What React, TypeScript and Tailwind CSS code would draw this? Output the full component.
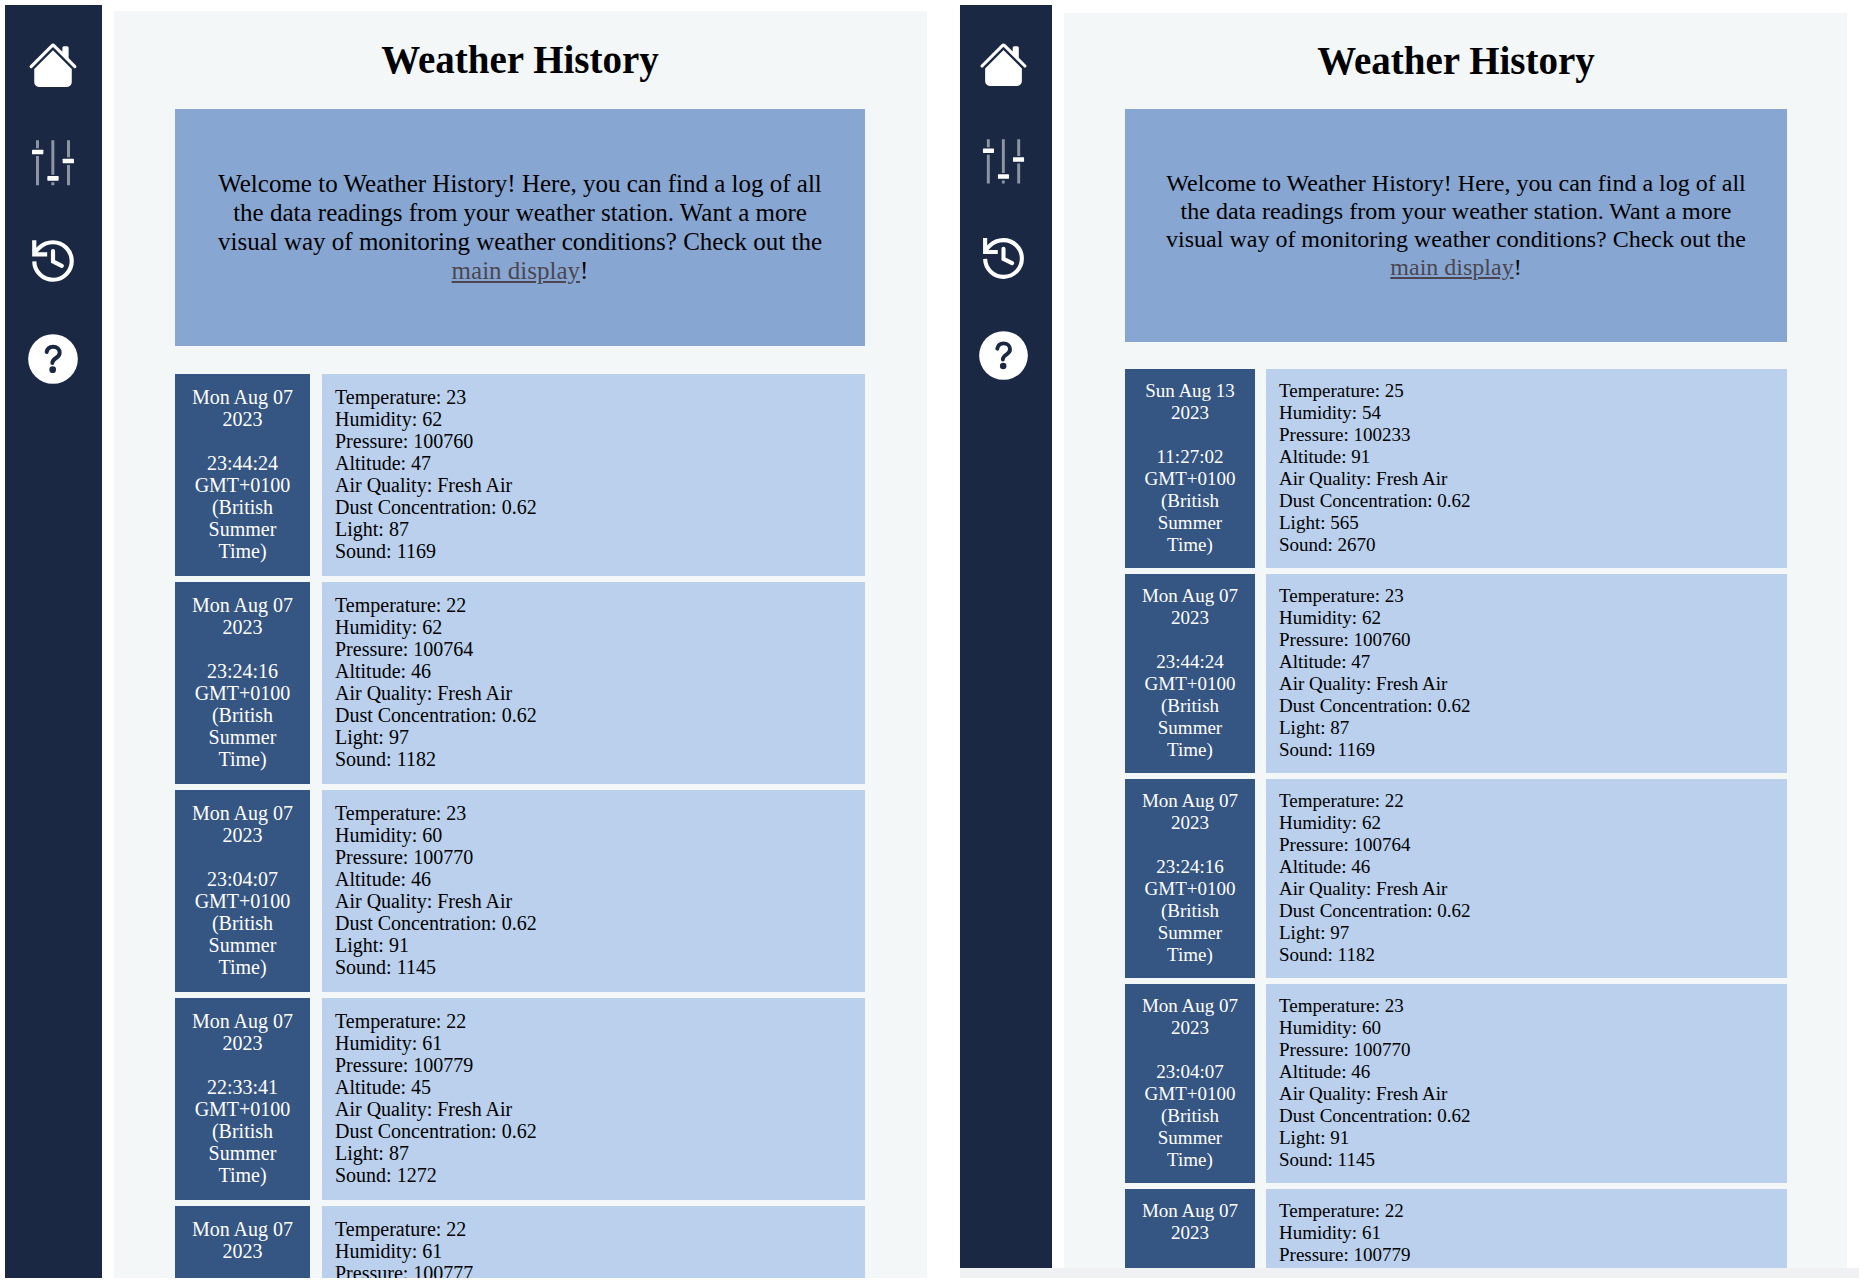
import React from "react";
import { BsHouseFill } from "react-icons/bs";

type Reading = {
  day: string;
  time: string;
  temperature: number;
  humidity: number;
  pressure: number;
  altitude: number;
  light: number;
  sound: number;
};

const newest: Reading = {
  day: "Sun Aug 13 2023", time: "11:27:02", temperature: 25, humidity: 54, pressure: 100233, altitude: 91, light: 565, sound: 2670,
};

const readings: Reading[] = [
  { day: "Mon Aug 07 2023", time: "23:44:24", temperature: 23, humidity: 62, pressure: 100760, altitude: 47, light: 87, sound: 1169 },
  { day: "Mon Aug 07 2023", time: "23:24:16", temperature: 22, humidity: 62, pressure: 100764, altitude: 46, light: 97, sound: 1182 },
  { day: "Mon Aug 07 2023", time: "23:04:07", temperature: 23, humidity: 60, pressure: 100770, altitude: 46, light: 91, sound: 1145 },
  { day: "Mon Aug 07 2023", time: "22:33:41", temperature: 22, humidity: 61, pressure: 100779, altitude: 45, light: 87, sound: 1272 },
  { day: "Mon Aug 07 2023", time: "22:13:33", temperature: 22, humidity: 61, pressure: 100777, altitude: 45, light: 88, sound: 1204 },
];

function SlidersIcon() {
  return (
    <svg viewBox="0 0 150 150" className="size-full" fill="#fff" aria-hidden="true">
      <g fillOpacity="0.5">
        <path d="M24 7h9v24h-9zM24 54h9v88h-9z" />
        <path d="M70 7h9v103h-9zM70 133h9v9h-9z" />
        <path d="M117 7h9v51h-9zM117 81h9v61h-9z" />
      </g>
      <rect x="12" y="35" width="34" height="14" rx="2" />
      <rect x="58" y="114" width="34" height="14" rx="2" />
      <rect x="104" y="62" width="34" height="14" rx="2" />
    </svg>
  );
}

function HistoryIcon() {
  return (
    <svg viewBox="0 0 24 24" className="size-full" fill="none" stroke="#fff" strokeWidth="2" aria-hidden="true">
      <path d="M3 12.200a9 9 0 1 0 9-9.200 9.750 9.750 0 0 0-6.740 2.740L3 8" />
      <path d="M3 3v5.800h5.200" strokeLinecap="square" />
      <path d="M12 7.200v5l4.200 2.100" strokeLinecap="round" />
    </svg>
  );
}

function HelpIcon() {
  return (
    <svg viewBox="0 0 150 150" className="size-full" aria-hidden="true">
      <circle cx="75" cy="75" r="74.500" fill="#fff" />
      <path
        d="M56 54C58 44 65 38 75 38C87 38 95 46 95 56C95 64 90 68 84 72C77 77 73 80 73 87"
        fill="none"
        stroke="#1a2844"
        strokeWidth="12"
        strokeLinecap="round"
      />
      <circle cx="74" cy="107" r="10" fill="#1a2844" />
    </svg>
  );
}

function Sidebar({ className, iconClass }: { className: string; iconClass: string }) {
  const items = [
    { label: "Home", icon: <BsHouseFill className="size-full" /> },
    { label: "Controls", icon: <SlidersIcon /> },
    { label: "History", icon: <HistoryIcon /> },
    { label: "Help", icon: <HelpIcon /> },
  ];
  return (
    <nav aria-label="Main" className={`flex shrink-0 flex-col items-center gap-12 bg-[#1a2844] pt-[35px] text-white ${className}`}>
      {items.map((item) => (
        <a key={item.label} href="#" aria-label={item.label} className={`block shrink-0 ${iconClass}`}>
          {item.icon}
        </a>
      ))}
    </nav>
  );
}

function Entry({ reading, dateClass, dataClass }: { reading: Reading; dateClass: string; dataClass: string }) {
  return (
    <li className="flex">
      <div className={`shrink-0 bg-[#355583] px-[13px] text-center text-white ${dateClass}`}>
        <p>{reading.day}</p>
        <p className="mt-[22px]">{reading.time} GMT+0100 (British Summer Time)</p>
      </div>
      <div className={`flex-1 bg-[#bad0ed] px-[13px] ${dataClass}`}>
        <p>Temperature: {reading.temperature}</p>
        <p>Humidity: {reading.humidity}</p>
        <p>Pressure: {reading.pressure}</p>
        <p>Altitude: {reading.altitude}</p>
        <p>Air Quality: Fresh Air</p>
        <p>Dust Concentration: 0.62</p>
        <p>Light: {reading.light}</p>
        <p>Sound: {reading.sound}</p>
      </div>
    </li>
  );
}

function Welcome({ className }: { className: string }) {
  return (
    <p className={`bg-[#87a6d2] px-9 text-center ${className}`}>
      Welcome to Weather History! Here, you can find a log of all the data readings from your weather station. Want a more
      visual way of monitoring weather conditions? Check out the{" "}
      <a href="#" className="text-[#4b4651] underline">main display</a>!
    </p>
  );
}

export default function App() {
  return (
    <div className="grid h-screen grid-cols-[922fr_899fr] grid-rows-[minmax(0,1fr)] gap-[33px] overflow-hidden bg-white pt-[5px] pr-[9px] pb-[10px] pl-[5px] font-['Liberation_Serif',serif] text-black">
      <section className="flex min-h-0 gap-3 overflow-hidden">
        <Sidebar className="w-[97px] pr-[2px]" iconClass="size-[50px]" />
        <main className="mt-[6px] flex-1 overflow-hidden bg-[#f3f7f8] pr-[62px] pl-[61px]">
          <h1 className="py-[27px] text-center text-[39px] leading-[44px] font-bold">Weather History</h1>
          <Welcome className="pt-[60px] pb-[61px] text-[25px] leading-[29px]" />
          <ul className="mt-[28px] flex flex-col gap-[6px] text-[20px] leading-[22px]">
            {readings.map((r) => (
              <Entry key={r.time} reading={r} dateClass="mr-3 w-[135px] pt-3 pb-[14px]" dataClass="pt-3 pb-[14px]" />
            ))}
          </ul>
        </main>
      </section>

      <section className="flex min-h-0 flex-col border-b-[10px] border-[#f0f1f3]">
        <div className="flex min-h-0 flex-1 gap-3 overflow-hidden">
          <Sidebar className="w-[92px] pr-[5px]" iconClass="size-[49px]" />
          <div className="mt-[8px] mr-3 flex-1 overflow-hidden bg-[#f3f7f8] pr-[60px] pl-[61px]">
            <h1 className="py-[26px] text-center text-[39px] leading-[44px] font-bold">Weather History</h1>
            <Welcome className="pt-[60px] pb-[61px] text-[24px] leading-[28px]" />
            <ul className="mt-[27px] flex flex-col gap-[6px] text-[19px] leading-[22px]">
              {[newest, ...readings.slice(0, 4)].map((r) => (
                <Entry key={r.time} reading={r} dateClass="mr-[11px] w-[130px] pt-[11px] pb-3" dataClass="pt-[11px] pb-3" />
              ))}
            </ul>
          </div>
        </div>
      </section>
    </div>
  );
}
